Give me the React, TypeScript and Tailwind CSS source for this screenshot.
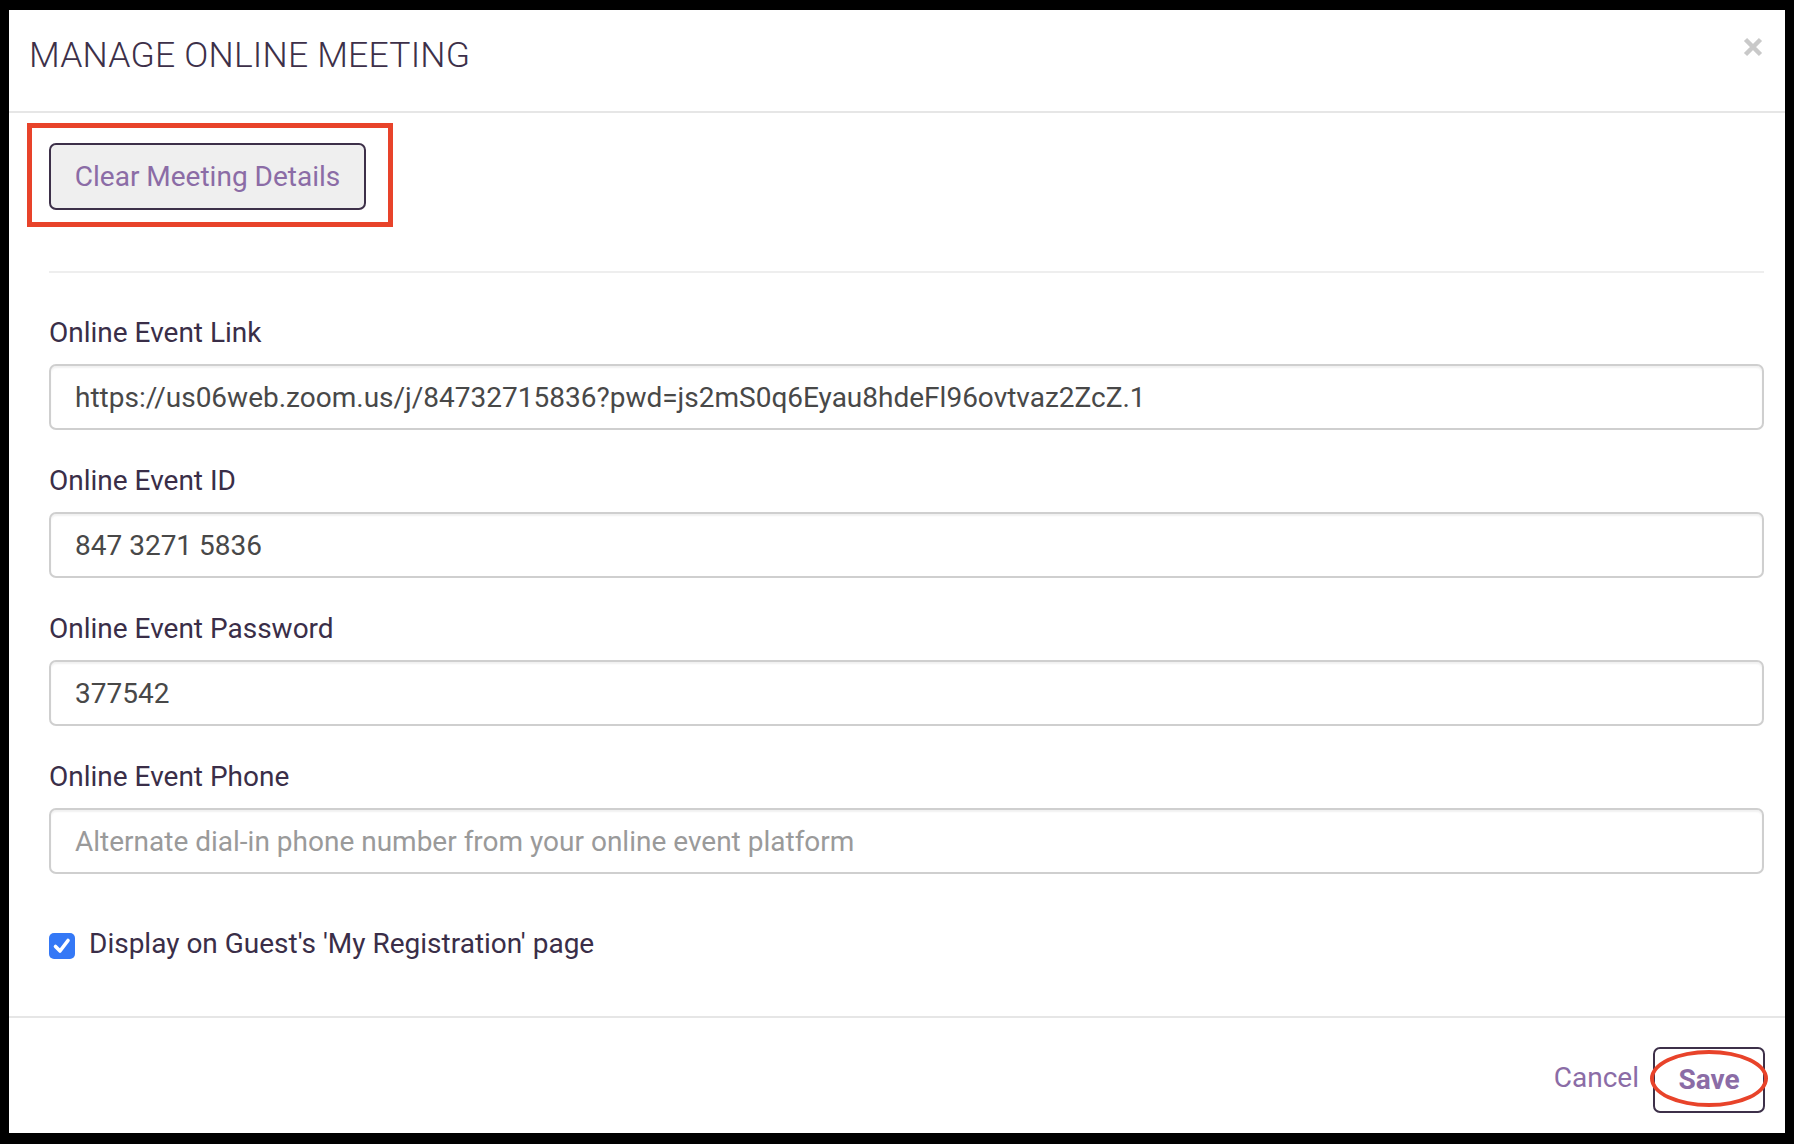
import React from "react";

const fields = [
  { label: "Online Event Link", value: "https://us06web.zoom.us/j/84732715836?pwd=js2mS0q6Eyau8hdeFl96ovtvaz2ZcZ.1", placeholder: "" },
  { label: "Online Event ID", value: "847 3271 5836", placeholder: "" },
  { label: "Online Event Password", value: "377542", placeholder: "" },
  { label: "Online Event Phone", value: "", placeholder: "Alternate dial-in phone number from your online event platform" },
];

export default function App() {
  return (
    <div
      className="w-[1794px] h-[1144px] bg-black pt-[10px] pl-[9px] pr-[9px] pb-[11px]"
      style={{ fontFamily: "Roboto, 'Liberation Sans', sans-serif" }}
    >
      <div className="h-full bg-white flex flex-col">
        {/* Header */}
        <div className="h-[103px] shrink-0 border-b-2 border-[#e6e6e6] flex justify-between items-start pl-[20px] pr-[22px] pt-[20px]">
          <h1 className="text-[35.5px] leading-[50px] font-light text-[#3d3049] tracking-[0.2px]">MANAGE ONLINE MEETING</h1>
          <button className="mt-[7px] w-[20px] h-[20px]" aria-label="Close">
            <svg width="20" height="20" viewBox="0 0 20 20">
              <path d="M2.5 2.5 L17.5 17.5 M17.5 2.5 L2.5 17.5" stroke="#c9c9c9" strokeWidth="4.5" strokeLinecap="butt" />
            </svg>
          </button>
        </div>

        {/* Body */}
        <div className="flex-1 flex flex-col pl-[40px] pr-[21px]">
          <div className="pt-[30px]">
            <div className="relative w-[317px]">
              <button className="w-[317px] h-[67px] bg-[#efefef] border-2 border-[#3d3049] rounded-[7px] text-[28px] text-[#8b6ca6] leading-none">
                Clear Meeting Details
              </button>
              <div className="absolute left-[-22px] top-[-20px] w-[366px] h-[104px] border-[5px] border-[#e8432a] pointer-events-none" />
            </div>
          </div>

          <div className="mt-[61px] h-[2px] bg-[#eeeeee]" />

          <div className="mt-[44px] flex flex-col gap-[35px]">
            {fields.map((f) => (
              <div key={f.label} className="flex flex-col">
                <label className="text-[28px] leading-[32px] text-[#3a2e48]">{f.label}</label>
                <input
                  readOnly
                  defaultValue={f.value}
                  placeholder={f.placeholder}
                  className="mt-[15px] h-[66px] w-full border-2 border-[#cfcfcf] rounded-[7px] px-[24px] text-[28px] text-[#484848] placeholder:text-[#9a9a9a] shadow-[inset_0_2px_2px_rgba(0,0,0,0.06)] outline-none bg-white"
                />
              </div>
            ))}
          </div>

          <div className="mt-[54px] flex items-start gap-[14px]">
            <div className="mt-[5px] w-[26px] h-[26px] rounded-[5px] bg-[#3478f6] flex items-center justify-center shrink-0">
              <svg width="20" height="20" viewBox="0 0 20 20">
                <path d="M3.5 10.5 L8 15 L16 4.5" fill="none" stroke="white" strokeWidth="3.6" strokeLinecap="round" strokeLinejoin="round" />
              </svg>
            </div>
            <span className="text-[28px] leading-[32px] text-[#3a2e48]">Display on Guest's 'My Registration' page</span>
          </div>
        </div>

        {/* Footer */}
        <div className="h-[117px] shrink-0 border-t-2 border-[#e6e6e6] flex justify-end items-start pt-[29px] pr-[20px] gap-[14px]">
          <span className="h-[65px] leading-[62px] text-[28px] text-[#8b6ca6]">Cancel</span>
          <div className="relative">
            <button className="w-[112px] h-[66px] border-2 border-[#3d3049] rounded-[7px] text-[28px] font-bold text-[#8b6ca6] leading-none">
              Save
            </button>
            <div className="absolute left-[-3px] top-[3px] w-[118px] h-[57px] rounded-[50%] border-[4px] border-[#e8432a] pointer-events-none" />
          </div>
        </div>
      </div>
    </div>
  );
}
